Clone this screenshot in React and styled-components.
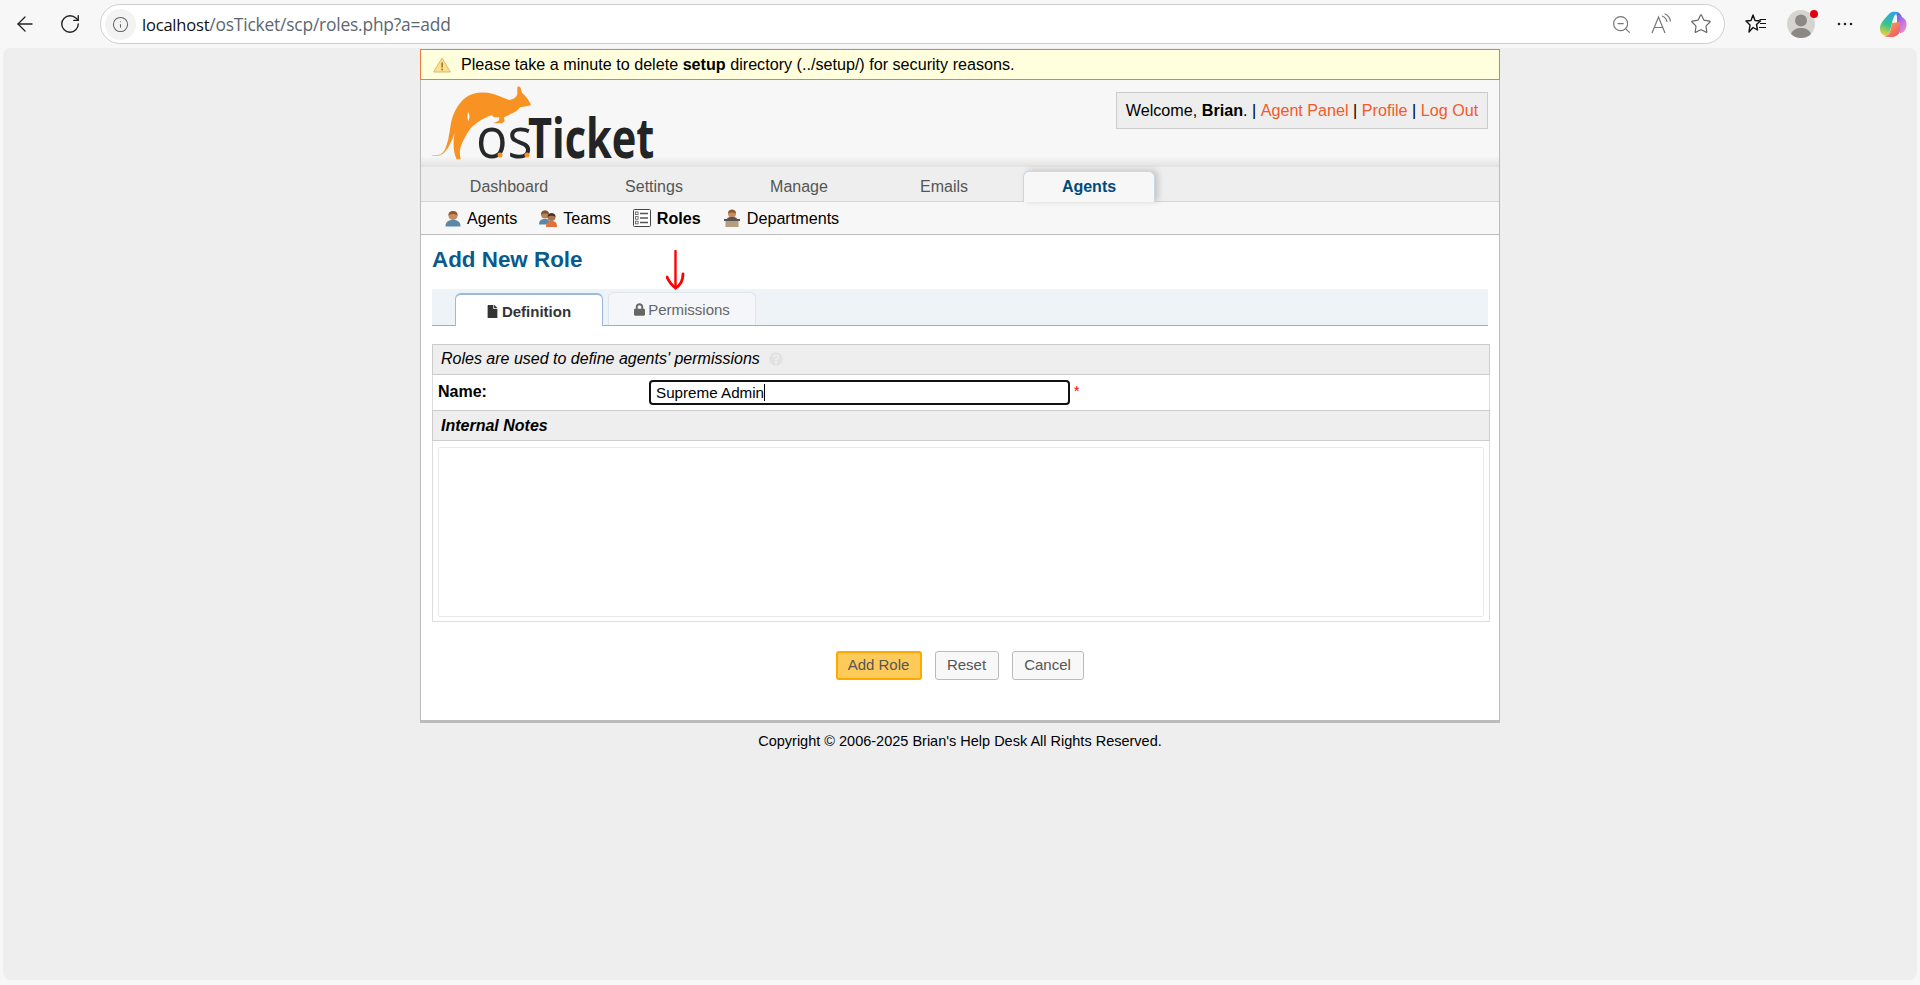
import styled, { createGlobalStyle } from "styled-components";
import { ArrowLeft, RotateCw, Info, ZoomOut, Star } from "lucide-react";
import { FaFile, FaLock, FaQuestionCircle } from "react-icons/fa";

const GlobalStyle = createGlobalStyle`
  html, body {
    margin: 0;
    padding: 0;
    background: #f7f7f7;
  }
  * {
    box-sizing: border-box;
  }
`;

const Win = styled.div`
  width: 1920px;
  height: 985px;
  display: flex;
  flex-direction: column;
  overflow: hidden;
  background: #f7f7f7;
  font-family: "Liberation Sans", Arial, sans-serif;
`;

const Toolbar = styled.header`
  height: 48px;
  flex: none;
  display: flex;
  align-items: center;
  padding: 0 0 0 13px;
`;

const ToolBtn = styled.span`
  width: ${(p) => p.$w || 24}px;
  height: 24px;
  flex: none;
  margin-left: ${(p) => p.$ml || 0}px;
  display: flex;
  align-items: center;
  justify-content: center;
  color: ${(p) => p.$color || "#222"};
  position: relative;
`;

const AddressBar = styled.div`
  width: 1625px;
  height: 40px;
  margin-left: 18px;
  flex: none;
  background: #fff;
  border: 1px solid #cfcfcf;
  border-radius: 20px;
  display: flex;
  align-items: center;
  padding: 0 11px 0 4px;
`;

const InfoWrap = styled.span`
  width: 31px;
  height: 31px;
  border-radius: 50%;
  background: #f3f3f3;
  color: #666;
  display: flex;
  align-items: center;
  justify-content: center;
  flex: none;
`;

const Url = styled.div`
  margin-left: 6px;
  flex: 1;
  font-family: "Open Sans", "Liberation Sans", sans-serif;
  font-size: 17.4px;
  color: #5c6770;
  letter-spacing: -0.2px;
  b {
    font-size: 16.5px;
    font-weight: 400;
    color: #111;
  }
`;

const ProfileDot = styled.span`
  position: absolute;
  top: -2px;
  right: -3px;
  width: 8px;
  height: 8px;
  border-radius: 50%;
  background: #e3000f;
`;

const Viewport = styled.main`
  flex: 1;
  margin: 0 3px 5px;
  background: #eeeeee;
  border-radius: 8px;
  display: flex;
  flex-direction: column;
  align-items: center;
  padding-top: 1px;
`;

const Page = styled.div`
  width: 1080px;
  background: #fff;
  border-left: 1px solid #bbb;
  border-right: 1px solid #bbb;
  border-bottom: 3px solid #bbb;
`;

const Notice = styled.div`
  height: 31px;
  margin: 0 -1px;
  background: #ffffdd;
  border: 1px solid #ee7a3c;
  display: flex;
  align-items: center;
  padding-left: 12px;
  font-size: 16.15px;
  color: #000;
  gap: 10px;
`;

const Header = styled.div`
  height: 87px;
  background: linear-gradient(#f7f7f7 0, #f7f7f7 76px, #e2e2e2 87px);
  display: flex;
  justify-content: space-between;
  align-items: flex-start;
  padding: 4px 11px 0 9px;
`;

const Welcome = styled.div`
  height: 37px;
  margin-top: 8px;
  width: 372px;
  background: #eee;
  border: 1px solid #ccc;
  display: flex;
  align-items: center;
  justify-content: center;
  font-size: 16.15px;
  color: #000;
  white-space: pre;
  a {
    color: #f15a2b;
    text-decoration: none;
  }
`;

const Nav = styled.nav`
  height: 35px;
  background: #eee;
  border-bottom: 1px solid #c5d9e8;
  display: flex;
  padding: 4px 0 0 22px;
  gap: 13px;
`;

const NavTab = styled.a`
  width: 132px;
  height: ${(p) => (p.$active ? 31 : 30)}px;
  font-size: 16px;
  font-weight: ${(p) => (p.$active ? 700 : 400)};
  color: ${(p) => (p.$active ? "#004a80" : "#555")};
  background: ${(p) => (p.$active ? "#f7f7f7" : "transparent")};
  border: ${(p) => (p.$active ? "1px solid #c5d9e8" : "1px solid transparent")};
  border-bottom: none;
  border-radius: 6px 6px 0 0;
  box-shadow: ${(p) => (p.$active ? "3px -1px 6px rgba(0,0,0,0.18)" : "none")};
  display: flex;
  align-items: center;
  justify-content: center;
`;

const SubNav = styled.div`
  height: 33px;
  background: #f7f7f7;
  border-bottom: 1px solid #bbb;
  display: flex;
  align-items: center;
  gap: 22px;
  padding: 0 0 0 24px;
`;

const SubItem = styled.a`
  display: flex;
  align-items: center;
  gap: 6px;
  font-size: 16.15px;
  color: #000;
  font-weight: ${(p) => (p.$active ? 700 : 400)};
`;

const Content = styled.div`
  padding: 0 11px;
  height: 485px;
  position: relative;
`;

const Title = styled.h2`
  margin: 0;
  height: 54px;
  padding-top: 12px;
  font-size: 22.4px;
  line-height: 26px;
  color: #0a5a8e;
  font-weight: 700;
`;

const Tabs = styled.div`
  height: 37px;
  background: #eef3f8;
  border-bottom: 1px solid #aaa;
  display: flex;
  align-items: flex-end;
  padding-left: 23px;
  gap: 5px;
`;

const Tab = styled.a`
  width: 148px;
  height: 33px;
  margin-bottom: ${(p) => (p.$active ? -1 : 0)}px;
  align-self: flex-end;
  background: ${(p) => (p.$active ? "#fff" : "#f4f6f9")};
  border: 1px solid ${(p) => (p.$active ? "#9cb9dc" : "#dfe5ec")};
  border-top-width: ${(p) => (p.$active ? 2 : 1)}px;
  border-bottom: none;
  border-radius: 6px 6px 0 0;
  color: ${(p) => (p.$active ? "#333" : "#666")};
  font-weight: ${(p) => (p.$active ? 700 : 400)};
  font-size: 15px;
  display: flex;
  align-items: center;
  justify-content: center;
  gap: ${(p) => (p.$active ? 4 : 3)}px;
  padding-top: ${(p) => (p.$active ? 2 : 0)}px;
  svg {
    width: 11px;
    height: 13px;
  }
`;

const FormBox = styled.section`
  margin-top: 18px;
  width: 1058px;
  border: 1px solid #ddd;
  border-top: none;
  height: 278px;
`;

const SectionHead = styled.div`
  height: 31px;
  margin: 0 -1px;
  background: #eee;
  border: 1px solid #ccc;
  display: flex;
  align-items: center;
  padding: 0 0 ${(p) => (p.$bold ? 0 : 1)}px 8px;
  font-size: 16px;
  font-style: italic;
  font-weight: ${(p) => (p.$bold ? 700 : 400)};
  color: #000;
  gap: 9px;
  svg {
    font-size: 14px;
    color: #e2e2e2;
  }
`;

const NameRow = styled.div`
  height: 35px;
  display: flex;
  align-items: center;
  padding-left: 5px;
  font-size: 16px;
`;

const NameLabel = styled.label`
  width: 211px;
  font-weight: 700;
  color: #000;
  padding-bottom: 2px;
`;

const NameInput = styled.div`
  width: 421px;
  height: 25px;
  border: 2px solid #111;
  border-radius: 4px;
  padding: 0 0 1px 5px;
  display: flex;
  align-items: center;
  font-size: 15.2px;
  color: #000;
  i {
    width: 1px;
    height: 17px;
    background: #000;
  }
`;

const Req = styled.span`
  color: #f00;
  font-size: 14px;
  margin-left: 4px;
  align-self: flex-start;
  margin-top: 8px;
`;

const NotesBox = styled.div`
  margin: 6px 5px 0;
  height: 170px;
  border: 1px solid #eaeaea;
  border-radius: 2px;
  background: #fff;
`;

const Actions = styled.div`
  display: flex;
  justify-content: center;
  gap: 13px;
  padding: 29px 0 0 0;
  margin-left: -1px;
`;

const Button = styled.button`
  height: 29px;
  padding: 0 0 3px;
  width: ${(p) => p.$w}px;
  font-family: inherit;
  font-size: 15px;
  color: #555;
  background: ${(p) => (p.$primary ? "#fecb5b" : "#f8f8f8")};
  border: ${(p) => (p.$primary ? "2px solid #ffa800" : "1px solid #bbb")};
  border-radius: 3px;
`;

const Arrow = styled.svg`
  position: absolute;
  left: 245px;
  top: 15px;
`;

const Copyright = styled.footer`
  margin-top: 9px;
  font-size: 14.5px;
  color: #000;
  text-align: center;
  line-height: 18px;
`;

function Logo() {
  return (
    <svg width="230" height="96" viewBox="0 0 230 96">
      <g transform="scale(0.3333)">
        <path
          fill="#f79223"
          d="M3 212 C20 217 34 214 44 198 C54 178 58 150 62 122 C68 92 80 62 108 40 C128 25 160 22 190 30 C210 36 228 46 240 48 C252 46 262 38 262 28 L262 10 C264 6 270 6 272 12 L276 26 C288 36 298 50 303 62 C296 68 284 66 270 70 C262 82 250 86 238 92 L222 100 L224 112 L216 118 L190 118 L206 110 L208 100 L192 100 L186 94 C172 96 150 110 134 122 C122 130 112 146 102 166 C92 184 86 200 92 226 L80 226 C70 206 68 176 74 146 C66 170 56 194 40 208 C28 218 12 218 3 212 Z"
        />
        <path fill="#f7f7f7" d="M114 84 C120 92 120 100 115 112 C112 104 112 94 114 84 Z" />
      </g>
      <text
        transform="translate(46 73.5) scale(0.92 1)"
        fontFamily="'Open Sans', sans-serif"
        fontWeight="400"
        fontSize="57"
        fill="#26282a"
      >
        os
      </text>
      <text
        transform="translate(98 74) scale(0.755 1)"
        fontFamily="'Open Sans', sans-serif"
        fontWeight="700"
        fontSize="55"
        fill="#222426"
      >
        Ticket
      </text>
      <circle cx="70" cy="71" r="2.5" fill="#f79223" />
      <circle cx="97" cy="71" r="2.5" fill="#f79223" />
    </svg>
  );
}

function WarnIcon() {
  return (
    <svg width="18" height="16" viewBox="0 0 18 16">
      <path d="M9 1 L17.4 15 L0.6 15 Z" fill="#fbe08e" stroke="#dcb877" strokeLinejoin="round" />
      <rect x="8.2" y="5.5" width="1.8" height="5" fill="#b08238" />
      <rect x="8.2" y="11.6" width="1.8" height="1.8" fill="#b08238" />
    </svg>
  );
}

function PersonIcon() {
  return (
    <svg width="16" height="17" viewBox="0 0 16 17">
      <path d="M0.5 16.5 C0.5 11.5 3.5 10 8 10 C12.5 10 15.5 11.5 15.5 16.5 Z" fill="#5a88a8" />
      <circle cx="8" cy="5.5" r="4.6" fill="#c98b5e" />
      <path d="M3.4 5.5 C3 -0.5 13 -0.5 12.6 5.5 C10.5 3.5 5.5 3.5 3.4 5.5 Z" fill="#8a5a35" />
    </svg>
  );
}

function TeamIcon() {
  return (
    <svg width="18" height="17" viewBox="0 0 18 17">
      <path d="M0 14.5 C0 10 3 9 6 9 C9 9 11 10 11 14.5 Z" fill="#5a88a8" />
      <circle cx="6" cy="4.6" r="4" fill="#b98358" />
      <path d="M2 4.6 C2 -0.8 10 -0.8 10 4.6 C8 3 4 3 2 4.6 Z" fill="#7d5433" />
      <path d="M7 17 C7 12.5 9 11 12.5 11 C16 11 18 12.5 18 17 Z" fill="#e2703a" />
      <circle cx="12.5" cy="7" r="4" fill="#a9744f" />
      <path d="M8.5 7 C8.5 2 16.5 2 16.5 7 C14.5 5.3 10.5 5.3 8.5 7 Z" fill="#3d3028" />
    </svg>
  );
}

function RolesIcon() {
  return (
    <svg width="18" height="18" viewBox="0 0 18 18">
      <rect x="0.5" y="0.5" width="17" height="17" rx="1" fill="#fff" stroke="#444" />
      <path d="M7 4.5 H15 M7 9 H15 M7 13.5 H15" stroke="#555" strokeWidth="1.4" />
      <rect x="2.5" y="3" width="2.6" height="2.6" fill="none" stroke="#666" strokeWidth="0.9" />
      <rect x="2.5" y="7.6" width="2.6" height="2.6" fill="none" stroke="#666" strokeWidth="0.9" />
      <rect x="2.5" y="12.2" width="2.6" height="2.6" fill="none" stroke="#666" strokeWidth="0.9" />
    </svg>
  );
}

function DeskIcon() {
  return (
    <svg width="18" height="18" viewBox="0 0 16 18">
      <circle cx="8" cy="4.6" r="4" fill="#c98b5e" />
      <path d="M4 4.6 C4 -0.6 12 -0.6 12 4.6 C10 3.2 6 3.2 4 4.6 Z" fill="#8a5a35" />
      <path d="M3 10 C3 8.5 5 8 8 8 C11 8 13 8.5 13 10 Z" fill="#555" />
      <rect x="0" y="10" width="16" height="2" fill="#555" />
      <rect x="1.5" y="12" width="13" height="6" fill="#b79d80" />
    </svg>
  );
}

function ReadAloudIcon() {
  return (
    <svg width="22" height="22" viewBox="0 0 22 22" fill="none" stroke="#777" strokeWidth="1.2">
      <path d="M2 20 L8.5 4 L15 20 M4.5 14.5 H12.5" />
      <path d="M12 3 C15 4 16.5 6 17 9" />
      <path d="M14.5 0.8 C18 2 20 5 20.5 8.5" />
    </svg>
  );
}

function FavoritesIcon() {
  return (
    <svg width="22" height="22" viewBox="0 0 22 22" fill="none" stroke="#111" strokeWidth="1.4">
      <path d="M8 2 L10 7.5 L15.5 8 L11.5 11.5 L12.5 17 L8 14.5 L4 19 L5 12 L1 8 L6 7.5 Z" strokeLinejoin="round" />
      <path d="M14.5 6.5 H21 M15 10.5 H21 M14 14.5 H21" strokeWidth="1.2" />
    </svg>
  );
}

function ProfileIcon() {
  return (
    <svg width="28" height="28" viewBox="0 0 28 28">
      <circle cx="14" cy="14" r="14" fill="#d6d4d0" />
      <circle cx="14" cy="10.5" r="6" fill="#8c8985" />
      <path d="M4 24 C6 19 10 18 14 18 C18 18 22 19 24 24 C21 27 17 28 14 28 C11 28 7 27 4 24 Z" fill="#8c8985" />
    </svg>
  );
}

function CopilotIcon() {
  return (
    <svg width="28" height="27" viewBox="0 0 28 27">
      <defs>
        <linearGradient id="cpA" x1="0.6" y1="0" x2="0.3" y2="1">
          <stop offset="0" stopColor="#2aa5e8" />
          <stop offset="0.55" stopColor="#37c58a" />
          <stop offset="1" stopColor="#f2d23c" />
        </linearGradient>
        <linearGradient id="cpB" x1="0" y1="0" x2="0.6" y2="1">
          <stop offset="0" stopColor="#2a6fe8" />
          <stop offset="0.5" stopColor="#b56be8" />
          <stop offset="1" stopColor="#e98ac8" />
        </linearGradient>
        <linearGradient id="cpC" x1="0" y1="0" x2="1" y2="1">
          <stop offset="0" stopColor="#f9b24a" />
          <stop offset="1" stopColor="#ec4f6b" />
        </linearGradient>
      </defs>
      <path d="M17 1 C20 1 22 3 23 6 C27 8 28.5 12 27 17 C26 20 24 22 21 22 L18 14 L18 6 Z" fill="url(#cpB)" />
      <path d="M11 2 C13 0.5 17 0.5 19 1.5 C16 3 14.5 6 13.5 10 L11 20 C10 24 7 26 4 24 C1 22 0 17 2 13 C4 9 8 5 11 2 Z" fill="url(#cpA)" />
      <path d="M13 12 L21 11 L21 20 C20 24 16 26.5 11 26 C8 26 6 25.5 5 25 C9 25 11 22 11.5 19 Z" fill="url(#cpC)" />
    </svg>
  );
}

export default function App() {
  return (
    <Win>
      <GlobalStyle />
      <Toolbar>
        <ToolBtn>
          <ArrowLeft size={26} strokeWidth={1.3} />
        </ToolBtn>
        <ToolBtn $ml={21}>
          <RotateCw size={22} strokeWidth={1.5} />
        </ToolBtn>
        <AddressBar>
          <InfoWrap>
            <Info size={17} strokeWidth={1.5} />
          </InfoWrap>
          <Url>
            <b>localhost</b>/osTicket/scp/roles.php?a=add
          </Url>
          <ToolBtn $color="#777">
            <ZoomOut size={21} strokeWidth={1.3} />
          </ToolBtn>
          <ToolBtn $ml={16}>
            <ReadAloudIcon />
          </ToolBtn>
          <ToolBtn $ml={16} $color="#666">
            <Star size={22} strokeWidth={1.3} />
          </ToolBtn>
        </AddressBar>
        <ToolBtn $ml={19}>
          <FavoritesIcon />
        </ToolBtn>
        <ToolBtn $ml={19} $w={28}>
          <ProfileIcon />
          <ProfileDot />
        </ToolBtn>
        <ToolBtn $ml={18} $color="#222">
          <svg width="16" height="4" viewBox="0 0 16 4" fill="#222">
            <circle cx="2" cy="2" r="1.3" />
            <circle cx="8" cy="2" r="1.3" />
            <circle cx="14" cy="2" r="1.3" />
          </svg>
        </ToolBtn>
        <ToolBtn $ml={22} $w={28}>
          <CopilotIcon />
        </ToolBtn>
      </Toolbar>
      <Viewport>
        <Page>
          <Notice>
            <WarnIcon />
            <span>
              Please take a minute to delete <b>setup</b> directory (../setup/) for security reasons.
            </span>
          </Notice>
          <Header>
            <Logo />
            <Welcome>
              Welcome, <b>Brian</b>. | <a href="#a">Agent Panel</a> | <a href="#p">Profile</a> |{" "}
              <a href="#l">Log Out</a>
            </Welcome>
          </Header>
          <Nav>
            <NavTab>Dashboard</NavTab>
            <NavTab>Settings</NavTab>
            <NavTab>Manage</NavTab>
            <NavTab>Emails</NavTab>
            <NavTab $active>Agents</NavTab>
          </Nav>
          <SubNav>
            <SubItem>
              <PersonIcon />
              Agents
            </SubItem>
            <SubItem>
              <TeamIcon />
              Teams
            </SubItem>
            <SubItem $active>
              <RolesIcon />
              Roles
            </SubItem>
            <SubItem>
              <DeskIcon />
              Departments
            </SubItem>
          </SubNav>
          <Content>
            <Arrow width="20" height="40" viewBox="0 0 20 40" fill="none" stroke="#f00" strokeLinecap="round">
              <path d="M9.5 1 L9.5 38" strokeWidth="2.4" />
              <path d="M1 27 C3 32 7 36 9.5 38 C13 36 17 33 17 24" strokeWidth="2.8" />
            </Arrow>
            <Title>Add New Role</Title>
            <Tabs>
              <Tab $active>
                <FaFile />
                Definition
              </Tab>
              <Tab>
                <FaLock />
                Permissions
              </Tab>
            </Tabs>
            <FormBox>
              <SectionHead>
                Roles are used to define agents' permissions
                <FaQuestionCircle />
              </SectionHead>
              <NameRow>
                <NameLabel>Name:</NameLabel>
                <NameInput>
                  Supreme Admin
                  <i />
                </NameInput>
                <Req>*</Req>
              </NameRow>
              <SectionHead $bold>Internal Notes</SectionHead>
              <NotesBox />
            </FormBox>
            <Actions>
              <Button $primary $w={86}>
                Add Role
              </Button>
              <Button $w={64}>Reset</Button>
              <Button $w={72}>Cancel</Button>
            </Actions>
          </Content>
        </Page>
        <Copyright>Copyright © 2006-2025 Brian's Help Desk All Rights Reserved.</Copyright>
      </Viewport>
    </Win>
  );
}
